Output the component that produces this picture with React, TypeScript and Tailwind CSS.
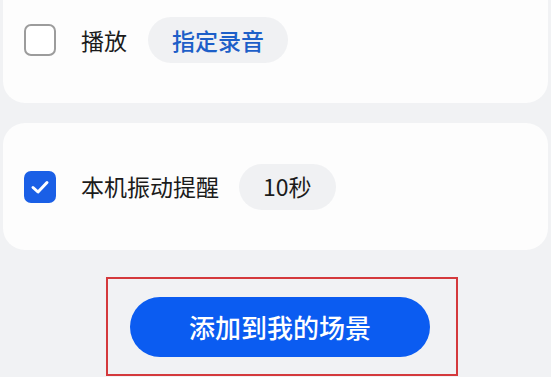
import React from "react";

const font = { fontFamily: '"Noto Sans CJK SC", "Noto Sans", sans-serif' };

export default function App() {
  return (
    <div
      className="w-[551px] h-[377px] bg-[#f1f2f4] overflow-hidden flex flex-col"
      style={font}
    >
      {/* Card 1 */}
      <div className="-mt-[24px] mx-[3px] h-[127px] bg-[#fdfdfd] rounded-[22px] flex items-end pb-[40px] pl-[21px]">
        <div className="flex items-center h-[46px]">
          <div className="w-[32px] h-[32px] rounded-[7px] border-2 border-[#9c9c9c] box-border bg-white" />
          <span className="ml-[25px] text-[23px] leading-none text-[#1b1b1b]">播放</span>
          <div className="ml-[21px] h-[46px] px-[24px] rounded-full bg-[#f0f1f3] flex items-center">
            <span className="text-[23px] leading-none text-[#1d5fc8] font-medium">指定录音</span>
          </div>
        </div>
      </div>

      {/* Card 2 */}
      <div className="mt-[20px] mx-[3px] h-[127px] bg-[#fdfdfd] rounded-[22px] flex items-center pl-[21px]">
        <div className="flex items-center h-[46px]">
          <div className="w-[32px] h-[32px] rounded-[7px] bg-[#1a5fe6] flex items-center justify-center">
            <svg width="24" height="24" viewBox="0 0 24 24" fill="none">
              <path d="M5 12.5 L10 17 L19 7.5" stroke="white" strokeWidth="3" strokeLinecap="round" strokeLinejoin="round" />
            </svg>
          </div>
          <span className="ml-[25px] text-[23px] leading-none text-[#1b1b1b]">本机振动提醒</span>
          <div className="ml-[20px] h-[46px] px-[24px] rounded-full bg-[#f0f1f3] flex items-center">
            <span className="text-[23px] leading-none text-[#1b1b1b]">10秒</span>
          </div>
        </div>
      </div>

      {/* Highlighted button area */}
      <div className="mt-[27px] ml-[106px] w-[352px] h-[99px] border-2 border-[#d4393c] box-border pt-[18px] pl-[22px]">
        <div className="w-[300px] h-[60px] rounded-full bg-[#0b5cf1] flex items-center justify-center">
          <span className="text-[26px] leading-none text-white font-medium">添加到我的场景</span>
        </div>
      </div>
    </div>
  );
}
